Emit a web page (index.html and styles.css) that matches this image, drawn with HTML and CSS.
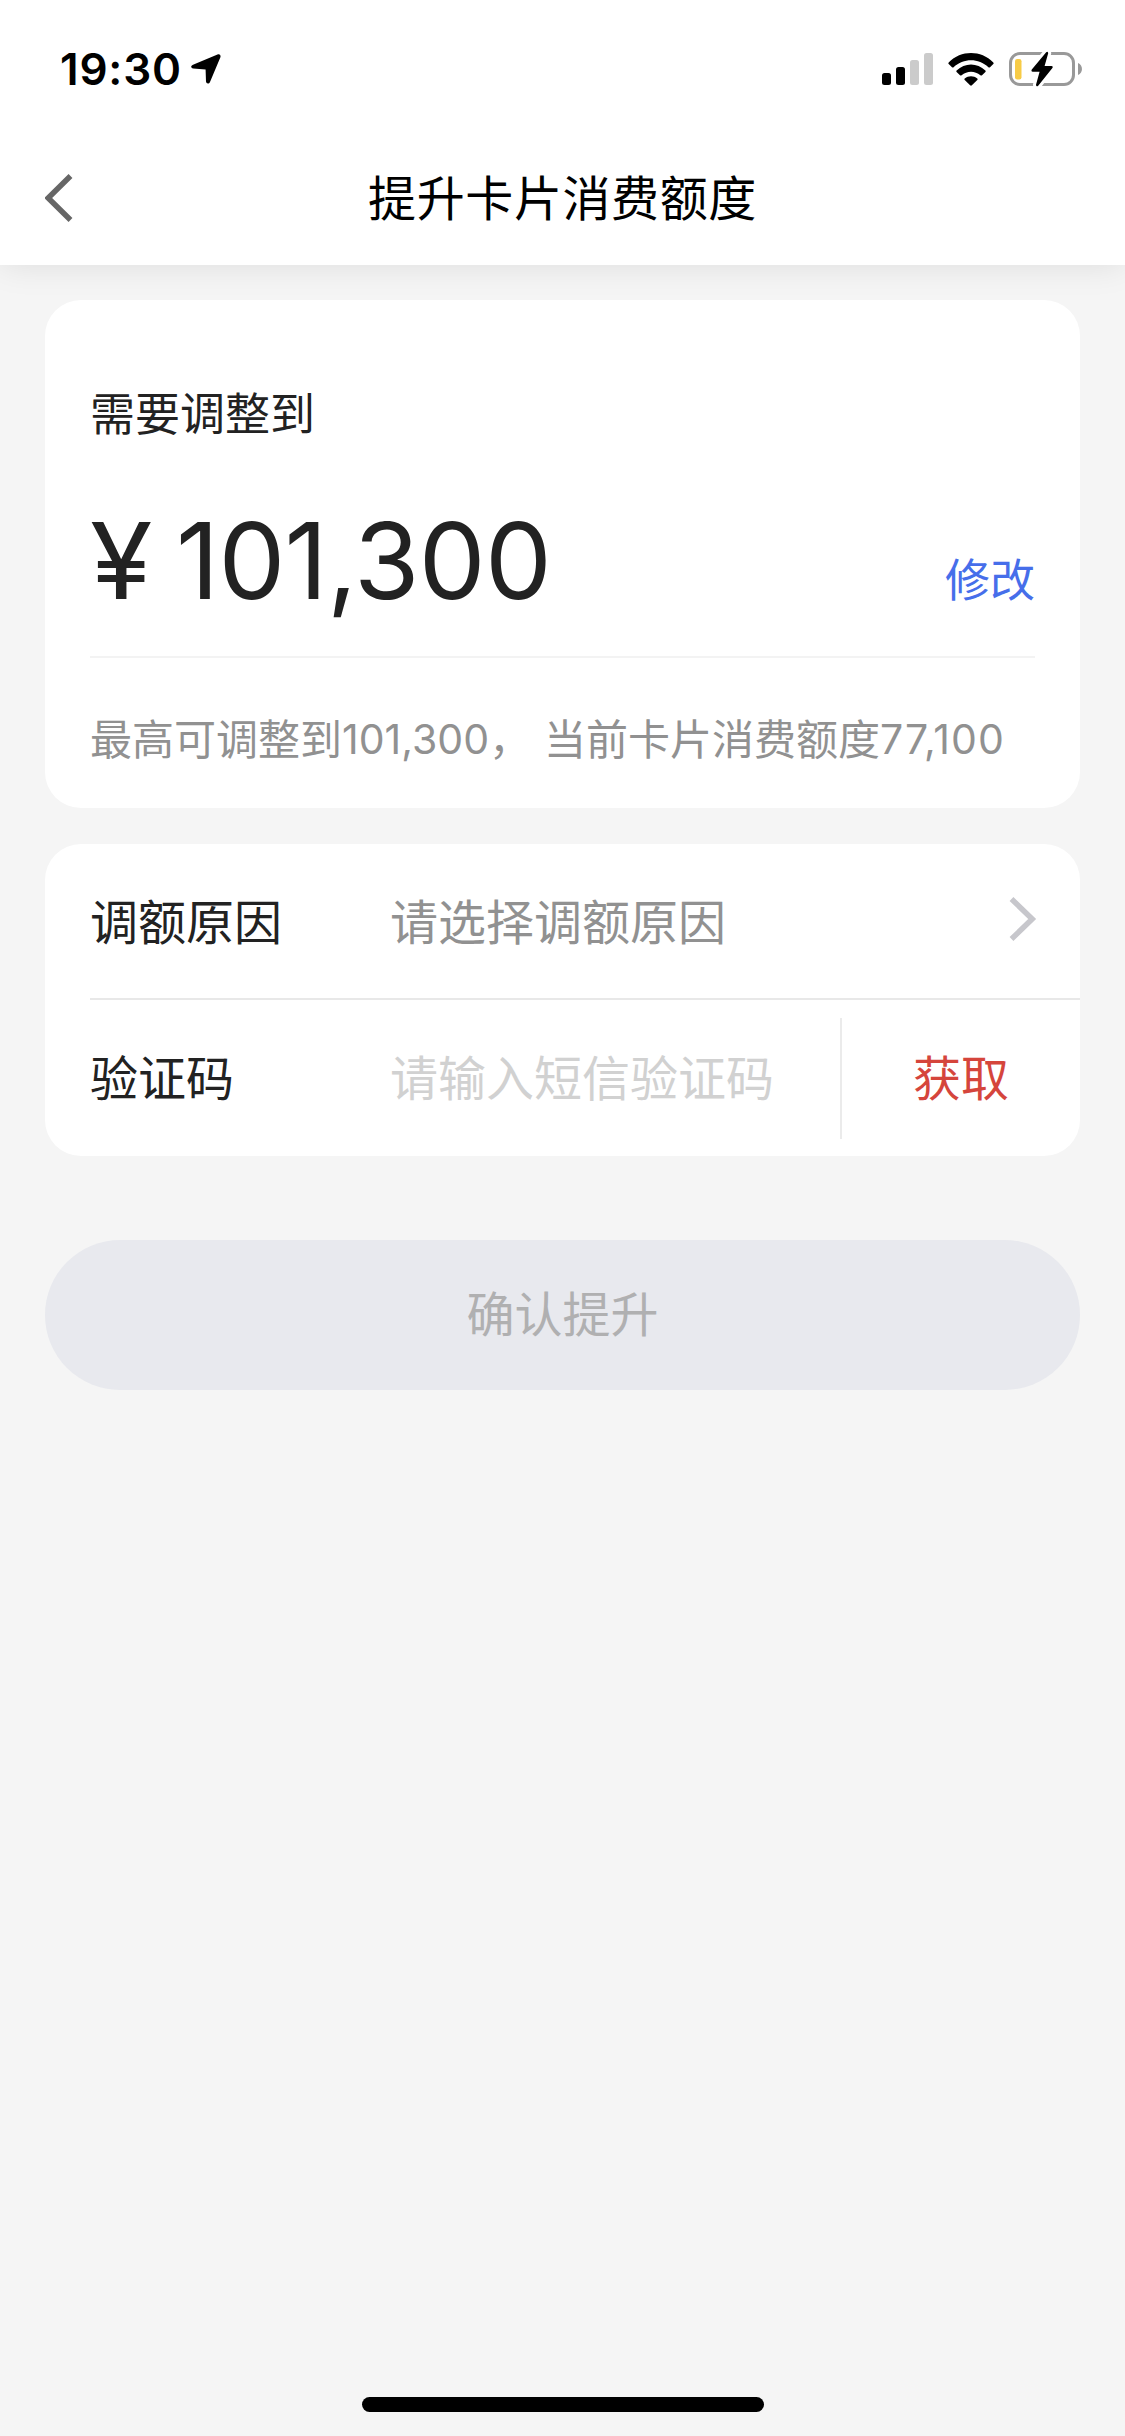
FILE: index.html
```html
<!DOCTYPE html>
<html lang="zh-CN">
<head>
<meta charset="utf-8">
<title>提升卡片消费额度</title>
<link rel="stylesheet" href="styles.css">
</head>
<body>
<div class="screen">
  <header class="header">
    <div class="status">
      <span class="time">19:30</span>
      <svg class="location" width="30" height="30" viewBox="0 0 30 30"><path d="M2 10.800L26.500 .4C28.600 -.3 30 1 29.400 3.200L19 28C18 30.200 15.300 30 15 27.600L14.600 15.400L2.200 14.600C-.4 14.200 -.5 11.800 2 10.800Z"/></svg>
      <div class="indicators">
        <svg width="51" height="32" viewBox="0 0 51 32">
          <rect x="0" y="20" width="9" height="12" rx="2.500"/>
          <rect x="14" y="14" width="9" height="18" rx="2.500"/>
          <rect x="28" y="7" width="9" height="25" rx="2.500" fill="#cbcbcb"/>
          <rect x="42" y="0" width="9" height="32" rx="2.500" fill="#cbcbcb"/>
        </svg>
        <svg class="wifi" width="46" height="33" viewBox="0 0 46 33">
          <path d="M.7 9.400C13 -3.100 33 -3.100 45.300 9.400Q46 10.200 45.300 11L42 14.200Q41.200 14.900 40.400 14.200C30.500 4.900 15.500 4.900 5.600 14.200Q4.800 14.900 4 14.200L.7 11Q0 10.200 .7 9.400Z"/>
          <path d="M8.600 17.500C16.800 9.500 29.200 9.500 37.400 17.500Q38.100 18.300 37.400 19L34 22.200Q33.200 22.900 32.400 22.200C27 17.500 19 17.500 13.600 22.200Q12.800 22.900 12 22.200L8.600 19Q7.900 18.300 8.600 17.500Z"/>
          <path d="M16.700 25.400C20.300 22.400 25.700 22.400 29.300 25.400Q30.100 26.200 29.300 27L23.900 32.300Q23 33 22.100 32.300L16.700 27Q15.900 26.200 16.700 25.400Z"/>
        </svg>
        <svg width="74" height="36" viewBox="0 0 74 36">
          <rect x="1.500" y="2.500" width="63" height="31" rx="9.500" fill="none" stroke="#999" stroke-width="3"/>
          <path d="M69 12C74.300 14 74.300 22 69 24Z" fill="#999"/>
          <rect x="6" y="8" width="6.500" height="20.500" rx="2.200" fill="#f7cb46"/>
          <path d="M37.200 1.200L22.800 18.600Q21.800 20.500 23.800 20.700H30.600L27 33.800Q27.200 36.200 29.200 34.800L43.400 17Q44.400 15.200 42.400 15H35.600L39.200 2.200Q39 -.2 37.200 1.200Z" stroke="#fff" stroke-width="6" stroke-linejoin="round"/>
          <path d="M37.200 1.200L22.800 18.600Q21.800 20.500 23.800 20.700H30.600L27 33.800Q27.200 36.200 29.200 34.800L43.400 17Q44.400 15.200 42.400 15H35.600L39.200 2.200Q39 -.2 37.200 1.200Z"/>
        </svg>
      </div>
    </div>
    <nav class="nav">
      <svg class="back" width="28" height="48" viewBox="0 0 28 48"><path d="M25.500 2L3.200 24L25.500 46" fill="none" stroke="#666" stroke-width="5.500"/></svg>
      <h1 class="title">提升卡片消费额度</h1>
    </nav>
  </header>

  <main class="content">
    <section class="card limit">
      <div class="limit-label">需要调整到</div>
      <div class="limit-row">
        <div class="amount"><span class="yen">¥</span><span>101,300</span></div>
        <a class="edit">修改</a>
      </div>
      <p class="hint">最高可调整到<span class="num">101,300</span><span class="comma">，</span><span>当前卡片消费额度</span><span class="num total">77,100</span></p>
    </section>

    <section class="card form">
      <div class="row">
        <span class="field">调额原因</span>
        <span class="value">请选择调额原因</span>
        <svg class="chevron" width="28" height="44" viewBox="0 0 28 44"><path d="M2.500 2L23.200 22L2.500 42" fill="none" stroke="#c7c7cc" stroke-width="5.500"/></svg>
      </div>
      <div class="row code">
        <span class="field">验证码</span>
        <span class="value placeholder">请输入短信验证码</span>
        <a class="get">获取</a>
      </div>
    </section>

    <button class="submit" disabled>确认提升</button>
  </main>
  <div class="home"></div>
</div>
</body>
</html>
```
FILE: styles.css
```css
* { box-sizing: border-box; }

body {
  margin: 0;
  background: #f5f5f5;
  color: #222;
  font-family: "Noto Sans CJK SC", sans-serif;
  font-size: 48px;
}

.screen {
  display: flex;
  flex-direction: column;
  width: 1125px;
  height: 2436px;
}

.header {
  height: 265px;
  background: #fff;
  box-shadow: 0 0 32px rgba(0, 0, 0, .1);
}

.status {
  display: flex;
  align-items: center;
  height: 132px;
  padding: 6px 42px 0 60px;
}

.time {
  width: 131px;
  color: #000;
  font: 600 44px/52px Inter, sans-serif;
  letter-spacing: .8px;
  white-space: nowrap;
}

.indicators {
  display: flex;
  align-items: center;
  gap: 15px;
  margin-left: auto;
}

.nav {
  display: grid;
  grid-template-columns: 130px 1fr 130px;
  align-items: center;
  height: 133px;
}

.back { margin: 0 0 2px 45px; }

.title {
  margin: 0;
  padding-bottom: 7px;
  color: #000;
  font-size: 48px;
  font-weight: 400;
  line-height: 72px;
  letter-spacing: .6px;
  text-align: center;
}

.content { padding: 35px 45px 0; }

.card {
  border-radius: 36px;
  background: #fff;
}

.limit {
  height: 508px;
  padding: 78px 45px 0;
}

.limit-label {
  font-size: 45px;
  line-height: 68px;
}

.limit-row {
  display: flex;
  justify-content: space-between;
  height: 212px;
  border-bottom: 2px solid #f3f3f3;
}

.amount {
  display: flex;
  padding-top: 51px;
  font: 400 106px/128px Inter, sans-serif;
  letter-spacing: -.7px;
}

.yen {
  width: 83px;
  margin-left: 3px;
  transform: scaleX(1.07);
}

.edit {
  padding-top: 98px;
  color: #466eea;
  font-size: 45px;
  line-height: 68px;
}

.hint {
  display: flex;
  margin: 0;
  padding-top: 47px;
  color: #919191;
  font-size: 42px;
  line-height: 64px;
  white-space: nowrap;
}

.num {
  padding-top: 2px;
  font-family: Inter, sans-serif;
  font-size: 41px;
}

.total { letter-spacing: 1px; }

.comma { width: 55px; }

.form {
  height: 312px;
  margin-top: 36px;
  padding-left: 45px;
}

.row {
  display: flex;
  align-items: center;
  height: 156px;
  padding-bottom: 5px;
  border-bottom: 2px solid #e8e8e8;
}

.code {
  padding-bottom: 0;
  border-bottom: 0;
}

.code .field,
.code .value { padding-bottom: 7px; }

.field { width: 300px; }

.value {
  flex: 1;
  color: #919191;
}

.value.placeholder { color: #d1d1d1; }

.chevron { margin: 0 43px 0 0; }

.get {
  width: 240px;
  height: 121px;
  border-left: 2px solid #ebebeb;
  color: #d5453c;
  line-height: 114px;
  text-align: center;
}

.submit {
  display: block;
  width: 100%;
  height: 150px;
  margin-top: 84px;
  padding: 0 0 8px;
  border: 0;
  border-radius: 75px;
  background: #e8e9ee;
  color: #b0b0b1;
  font: inherit;
}

.home {
  width: 402px;
  height: 15px;
  margin: auto auto 24px;
  border-radius: 8px;
  background: #000;
}
```
